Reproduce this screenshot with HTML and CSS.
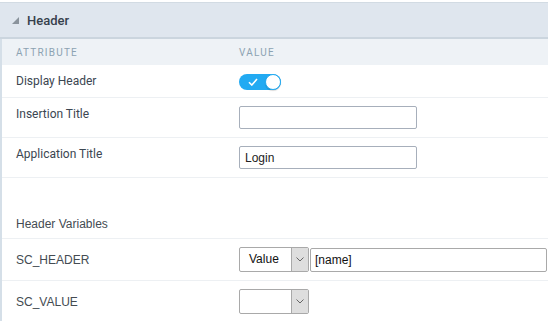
FILE: index.html
```html
<!DOCTYPE html>
<html lang="en">
<head>
    <meta charset="UTF-8">
    <title>Header Settings</title>
    <link rel="stylesheet" href="styles.css">
</head>
<body>

    <div class="panel">
        <div class="panel-title">
            <span class="caret"></span>
            <span>Header</span>
        </div>

        <div class="row col-head">
            <div class="attr">Attribute</div>
            <div class="val">Value</div>
        </div>

        <div class="row row-toggle">
            <div class="attr">Display Header</div>
            <div class="val">
                <span class="toggle">
                    <svg class="check" width="10" height="8" viewBox="0 0 10 8">
                        <path d="M1 4.2 L3.8 7 L9 1" fill="none" stroke="#fff" stroke-width="1.6"/>
                    </svg>
                    <span class="knob"></span>
                </span>
            </div>
        </div>

        <div class="row row-input">
            <div class="attr">Insertion Title</div>
            <div class="val"><input class="text-input" type="text" value=""></div>
        </div>

        <div class="row row-input">
            <div class="attr">Application Title</div>
            <div class="val"><input class="text-input" type="text" value="Login"></div>
        </div>

        <div class="row row-group plain">
            <div class="attr">Header Variables</div>
        </div>

        <div class="row plain">
            <div class="attr">SC_HEADER</div>
            <div class="val">
                <span class="select"><span class="select-text">Value</span><span class="select-btn"><svg width="8" height="5" viewBox="0 0 8 5"><path d="M0.5 0.5 L4 4 L7.5 0.5" fill="none" stroke="#666" stroke-width="1"/></svg></span></span>
                <input class="var-input" type="text" value="[name]">
            </div>
        </div>

        <div class="row plain last">
            <div class="attr">SC_VALUE</div>
            <div class="val">
                <span class="select"><span class="select-text"></span><span class="select-btn"><svg width="8" height="5" viewBox="0 0 8 5"><path d="M0.5 0.5 L4 4 L7.5 0.5" fill="none" stroke="#666" stroke-width="1"/></svg></span></span>
            </div>
        </div>
    </div>

</body>
</html>
```

FILE: styles.css
```css
/* General Styles */
body {
    margin: 0;
    padding: 0;
    background: #fff;
    font-family: Roboto, "Liberation Sans", Arial, sans-serif;
    color: #3b4651;
}
.panel {
    margin-top: 2px;
    border-left: 2px solid #d5dfe8;
}
.panel-title {
    height: 34px;
    background: #dfe6ee;
    border-top: 1px solid #d2dbe3;
    border-bottom: 2px solid #cbd5de;
    display: flex;
    align-items: center;
    padding-left: 12px;
    font-size: 13px;
    font-weight: 500;
    color: #36414c;
    margin-left: -2px;
}
.caret {
    width: 0;
    height: 0;
    border-left: 7px solid transparent;
    border-bottom: 7px solid #8a939c;
    margin-right: 8px;
    margin-top: 1px;
}
.row {
    display: flex;
    align-items: center;
    height: 39px;
    border-bottom: 1px solid #edf0f3;
    font-size: 12px;
}
.attr {
    width: 223px;
    padding-left: 14px;
}
.col-head {
    height: 26px;
    background: #eef2f6;
    border-bottom: none;
    font-size: 10px;
    letter-spacing: 1.2px;
    text-transform: uppercase;
    color: #8ca2b2;
}
.row-toggle {
    height: 32px;
}
.row-input .attr {
    margin-bottom: 7px;
}
.toggle {
    position: relative;
    display: block;
    width: 42px;
    height: 16px;
    border-radius: 8px;
    background: #22aaf2;
    margin-top: 1px;
}
.check {
    position: absolute;
    left: 9px;
    top: 4px;
}
.knob {
    position: absolute;
    right: 0;
    top: 0;
    width: 14px;
    height: 14px;
    border-radius: 50%;
    background: #fff;
    border: 1px solid #22aaf2;
    box-shadow: 0 1px 1px rgba(0, 0, 0, 0.15);
}
.text-input {
    box-sizing: border-box;
    width: 178px;
    height: 23px;
    margin: 0;
    padding: 2px 5px;
    border: 1px solid #a7afbb;
    border-radius: 2px;
    font-family: "Liberation Sans", Arial, sans-serif;
    font-size: 12px;
    color: #222;
}
.plain {
    font-family: "Liberation Sans", Arial, sans-serif;
    color: #444b52;
}
.plain.row {
    height: 41px;
}
.plain.row-group {
    height: 61px;
    align-items: flex-end;
    padding-bottom: 7px;
    box-sizing: border-box;
}
.last {
    border-bottom: none;
}
.val {
    display: flex;
    align-items: center;
}
.select {
    box-sizing: border-box;
    display: flex;
    width: 70px;
    height: 25px;
    border: 1px solid #a9a9a9;
    border-radius: 2px;
    background: #fff;
    overflow: hidden;
}
.select-text {
    flex: 1;
    padding-left: 9px;
    line-height: 23px;
    font-size: 12px;
    color: #111;
}
.select-btn {
    width: 16px;
    background: #dedede;
    border-left: 1px solid #a9a9a9;
    display: flex;
    align-items: center;
    justify-content: center;
}
.var-input {
    box-sizing: border-box;
    width: 237px;
    height: 24px;
    margin: 0 0 0 1px;
    padding: 2px 4px;
    border: 1px solid #a9a9a9;
    border-radius: 2px;
    font-family: "Liberation Sans", Arial, sans-serif;
    font-size: 12px;
    color: #111;
}
```
